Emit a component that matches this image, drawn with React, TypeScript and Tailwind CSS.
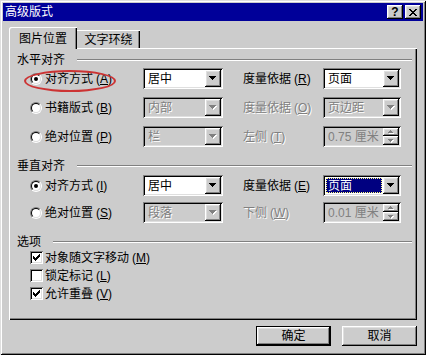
import React from "react";

const raised =
  "shadow-[inset_-1px_-1px_#000,inset_1px_1px_#fff,inset_-2px_-2px_#808080,inset_2px_2px_#dfdfdf]";
const sunken =
  "shadow-[inset_1px_1px_#808080,inset_-1px_-1px_#fff,inset_2px_2px_#000,inset_-2px_-2px_#dfdfdf]";
const dis = "text-[#808080] [text-shadow:1px_1px_0_#fff]";

function Arrow({ disabled }: { disabled?: boolean }) {
  const d = "M0 0h7v1H0z M1 1h5v1H1z M2 2h3v1H2z M3 3h1v1H3z";
  return (
    <svg width="8" height="5" viewBox="0 0 8 5">
      {disabled && <path d={d} fill="#fff" transform="translate(1 1)" />}
      <path d={d} fill={disabled ? "#808080" : "#000"} />
    </svg>
  );
}

function SmallArrow({ up }: { up?: boolean }) {
  const d = up
    ? "M2 0h1v1H2z M1 1h3v1H1z M0 2h5v1H0z"
    : "M0 0h5v1H0z M1 1h3v1H1z M2 2h1v1H2z";
  return (
    <svg width="6" height="4" viewBox="0 0 6 4">
      <path d={d} fill="#fff" transform="translate(1 1)" />
      <path d={d} fill="#808080" />
    </svg>
  );
}

function Combo({
  text,
  w,
  disabled,
  selected,
}: {
  text: string;
  w: string;
  disabled?: boolean;
  selected?: boolean;
}) {
  return (
    <div
      className={`${w} h-[21px] p-[2px] flex ${sunken} ${
        disabled ? "bg-[#cccccc]" : "bg-white"
      }`}
    >
      <div className="flex-1 min-w-0 flex items-center">
        {selected ? (
          <div className="m-[1px] flex-1 h-[15px] bg-[#000080] text-white flex items-center pl-[1px] border border-dotted border-[#ffff80]">
            {text}
          </div>
        ) : (
          <span className={`pl-[3px] ${disabled ? dis : ""}`}>{text}</span>
        )}
      </div>
      <div
        className={`w-[16px] h-[17px] bg-[#cccccc] ${raised} flex items-center justify-center`}
      >
        <Arrow disabled={disabled} />
      </div>
    </div>
  );
}

function Spin({ text }: { text: string }) {
  return (
    <div className={`w-[78px] h-[21px] p-[2px] flex bg-[#cccccc] ${sunken}`}>
      <div className="flex-1 flex items-center pl-[3px] text-[#808080]">{text}</div>
      <div className="w-[16px] flex flex-col">
        <div className={`h-[8px] ${raised} flex items-center justify-center`}>
          <SmallArrow up />
        </div>
        <div className={`h-[9px] ${raised} flex items-center justify-center`}>
          <SmallArrow />
        </div>
      </div>
    </div>
  );
}

function Radio({ checked }: { checked?: boolean }) {
  return (
    <div className="w-[12px] h-[12px] rounded-full border border-t-[#808080] border-l-[#808080] border-r-white border-b-white shrink-0">
      <div className="w-full h-full rounded-full border border-t-black border-l-black border-r-[#dfdfdf] border-b-[#dfdfdf] bg-white flex items-center justify-center">
        {checked && <div className="w-[4px] h-[4px] rounded-full bg-black" />}
      </div>
    </div>
  );
}

function Check({ checked }: { checked?: boolean }) {
  return (
    <div className={`w-[13px] h-[13px] bg-white ${sunken} flex items-center justify-center shrink-0`}>
      {checked && (
        <svg width="7" height="7" viewBox="0 0 7 7">
          <path
            d="M6 0h1v1h-1z M5 1h2v1h-2z M0 2h1v1h-1z M4 2h3v1h-3z M0 3h2v1h-2z M3 3h3v1h-3z M0 4h5v1h-5z M1 5h3v1h-3z M2 6h1v1h-1z"
            fill="#000"
          />
        </svg>
      )}
    </div>
  );
}

function Label({ t, k, disabled }: { t: string; k: string; disabled?: boolean }) {
  return (
    <span className={`whitespace-nowrap ${disabled ? dis : ""}`}>
      {t}
      <span className="ml-[3px]">
        (<u>{k}</u>)
      </span>
    </span>
  );
}

function Header({ t, mt }: { t: string; mt: string }) {
  return (
    <div className={`${mt} h-[14px] flex items-center pl-[8px] pr-[5px]`}>
      <span className="whitespace-nowrap">{t}</span>
      <div className="flex-1 ml-[12px] h-[2px] border-t border-b border-t-[#808080] border-b-white" />
    </div>
  );
}

function Row({
  mt,
  radio,
  label,
  combo,
  label2,
  right,
}: {
  mt: string;
  radio: React.ReactNode;
  label: React.ReactNode;
  combo: React.ReactNode;
  label2: React.ReactNode;
  right: React.ReactNode;
}) {
  return (
    <div className={`${mt} flex items-center h-[21px]`}>
      <div className="w-[134px] pl-[21px] flex items-center gap-[3px]">
        {radio}
        {label}
      </div>
      {combo}
      <div className="w-[100px] pl-[20px] flex items-center">{label2}</div>
      {right}
    </div>
  );
}

function CheckRow({ mt, checked, t, k }: { mt: string; checked?: boolean; t: string; k: string }) {
  return (
    <div className={`${mt} flex items-center h-[13px] pl-[21px] gap-[2px]`}>
      <Check checked={checked} />
      <Label t={t} k={k} />
    </div>
  );
}

export default function App() {
  return (
    <div className="w-[426px] h-[355px] bg-[#cccccc] p-[3px] flex flex-col text-[12px] leading-none text-black [font-family:'Liberation_Sans','Noto_Sans_CJK_SC',sans-serif] shadow-[inset_1px_1px_#dfdfdf,inset_-1px_-1px_#000,inset_2px_2px_#fff,inset_-2px_-2px_#808080] select-none">
      {/* title bar */}
      <div className="h-[18px] bg-[#000099] flex items-center justify-between pl-[2px] pr-[2px] shrink-0">
        <span className="text-white text-[12px]">高级版式</span>
        <div className="flex gap-[2px]">
          <div className={`w-[16px] h-[14px] bg-[#cccccc] ${raised} flex items-center justify-center font-bold text-[12px] pb-[1px]`}>
            ?
          </div>
          <div className={`w-[16px] h-[14px] bg-[#cccccc] ${raised} flex items-center justify-center`}>
            <svg width="8" height="7" viewBox="0 0 8 7">
              <path
                d="M0 0h2v1H0z M6 0h2v1H6z M1 1h2v1H1z M5 1h2v1H5z M2 2h4v1H2z M3 3h2v1H3z M2 4h4v1H2z M1 5h2v1H1z M5 5h2v1H5z M0 6h2v1H0z M6 6h2v1H6z"
                fill="#000"
              />
            </svg>
          </div>
        </div>
      </div>

      {/* tabs */}
      <div className="mt-[6px] ml-[6px] flex items-end h-[21px] shrink-0">
        <div className="relative z-10 self-start w-[68px] h-[22px] bg-[#cccccc] rounded-tl-[2px] shadow-[inset_1px_1px_#fff,inset_-1px_0_#000,inset_-2px_0_#808080] flex items-center justify-center pt-[1px]">
          图片位置
        </div>
        <div className="w-[63px] h-[18px] shadow-[inset_0_1px_#fff,inset_-1px_0_#000,inset_-2px_0_#808080] flex items-center justify-center pt-[2px]">
          文字环绕
        </div>
      </div>

      {/* panel */}
      <div className="relative ml-[6px] w-[408px] h-[272px] flex flex-col shrink-0 shadow-[inset_1px_1px_#fff,inset_-1px_-1px_#000,inset_-2px_-2px_#808080]">
        <Header t="水平对齐" mt="mt-[5px]" />
        <Row
          mt="mt-[1px]"
          radio={<Radio checked />}
          label={<Label t="对齐方式" k="A" />}
          combo={<Combo text="居中" w="w-[80px]" />}
          label2={<Label t="度量依据" k="R" />}
          right={<Combo text="页面" w="w-[78px]" />}
        />
        <Row
          mt="mt-[8px]"
          radio={<Radio />}
          label={<Label t="书籍版式" k="B" />}
          combo={<Combo text="内部" w="w-[80px]" disabled />}
          label2={<Label t="度量依据" k="O" disabled />}
          right={<Combo text="页边距" w="w-[78px]" disabled />}
        />
        <Row
          mt="mt-[8px]"
          radio={<Radio />}
          label={<Label t="绝对位置" k="P" />}
          combo={<Combo text="栏" w="w-[80px]" disabled />}
          label2={<Label t="左侧" k="T" disabled />}
          right={<Spin text="0.75 厘米" />}
        />

        <Header t="垂直对齐" mt="mt-[12px]" />
        <Row
          mt="mt-[2px]"
          radio={<Radio checked />}
          label={<Label t="对齐方式" k="I" />}
          combo={<Combo text="居中" w="w-[80px]" />}
          label2={<Label t="度量依据" k="E" />}
          right={<Combo text="页面" w="w-[78px]" selected />}
        />
        <Row
          mt="mt-[6px]"
          radio={<Radio />}
          label={<Label t="绝对位置" k="S" />}
          combo={<Combo text="段落" w="w-[80px]" disabled />}
          label2={<Label t="下侧" k="W" disabled />}
          right={<Spin text="0.01 厘米" />}
        />

        <Header t="选项" mt="mt-[12px]" />
        <CheckRow mt="mt-[2px]" checked t="对象随文字移动" k="M" />
        <CheckRow mt="mt-[5px]" t="锁定标记" k="L" />
        <CheckRow mt="mt-[5px]" checked t="允许重叠" k="V" />

        {/* red highlight ellipse */}
        <div className="absolute left-[15px] top-[22px] w-[92px] h-[22px] rounded-[50%] border-2 border-[#cc3333] pointer-events-none" />
      </div>

      {/* buttons */}
      <div className="mt-[6px] flex justify-end gap-[11px] pr-[6px] shrink-0">
        <div className="w-[75px] h-[20px] border border-black">
          <div className={`w-full h-full ${raised} flex items-center justify-center`}>确定</div>
        </div>
        <div className={`w-[75px] h-[20px] ${raised} flex items-center justify-center`}>取消</div>
      </div>
    </div>
  );
}
